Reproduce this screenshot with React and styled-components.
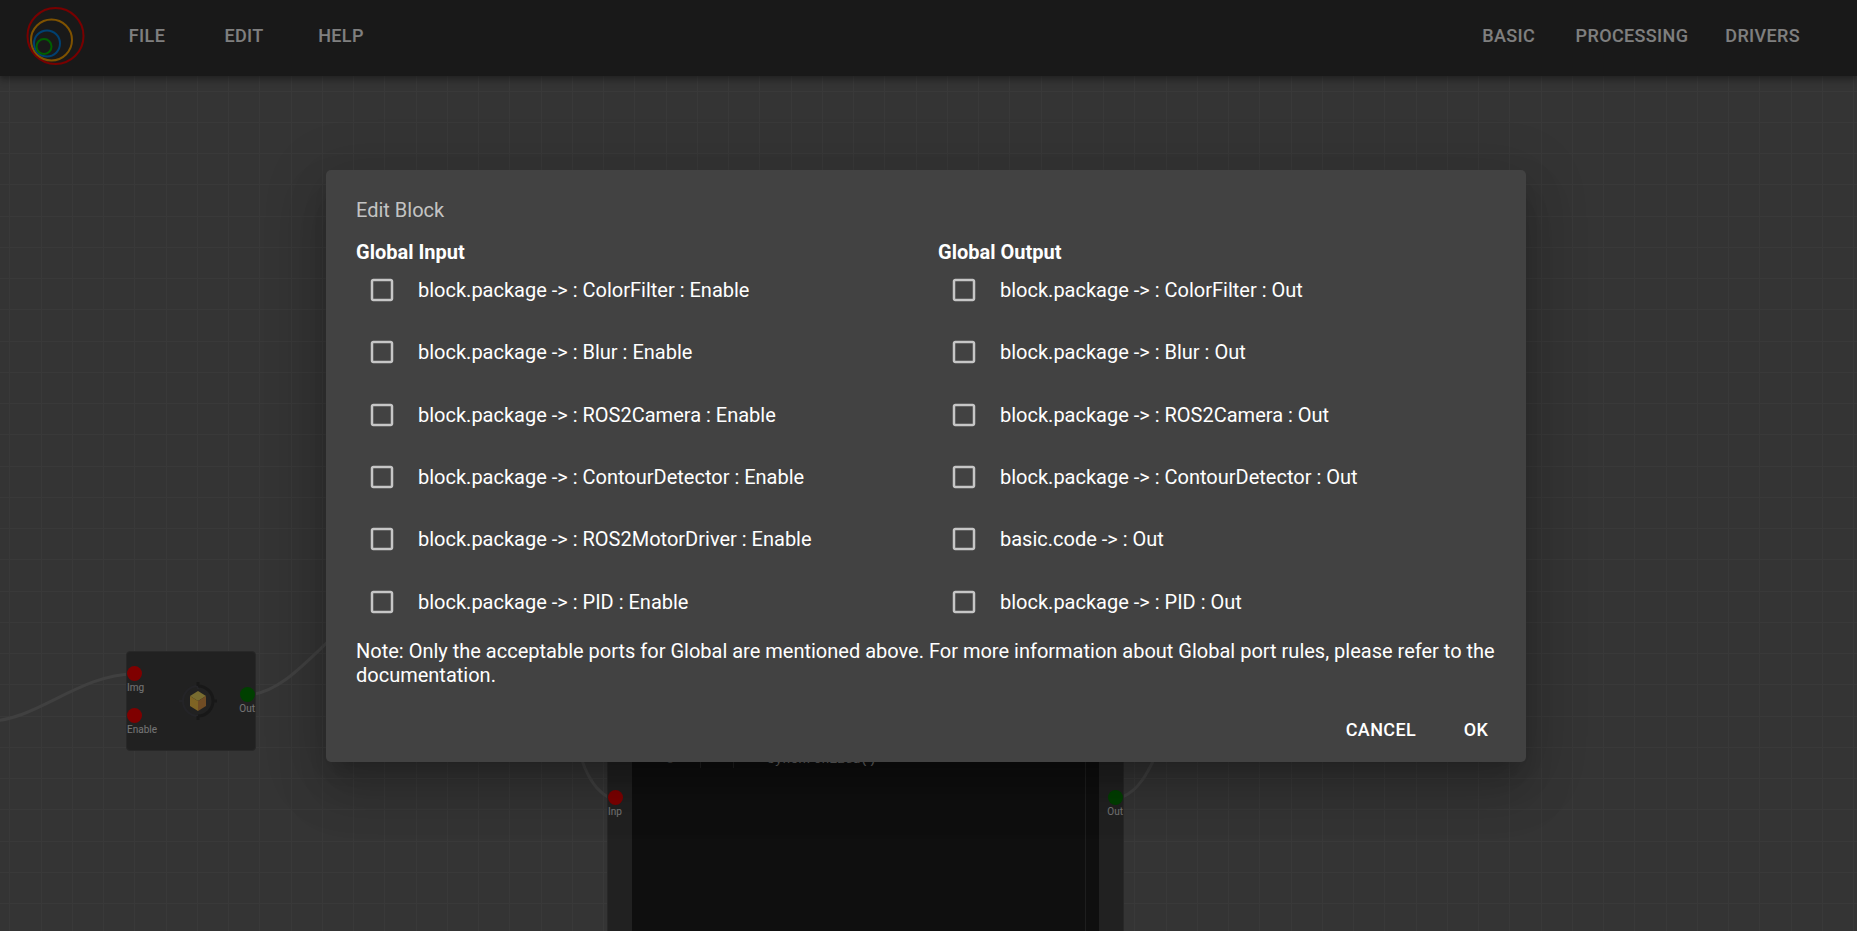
import React from 'react';
import styled, { createGlobalStyle } from 'styled-components';

const GlobalStyle = createGlobalStyle`
  * { box-sizing: border-box; }
  html, body, #root { height: 100%; }
  body {
    margin: 0;
    overflow: hidden;
    background: #686868;
    color: #fff;
    font-family: Roboto, "Liberation Sans", sans-serif;
    font-size: 20px;
  }
`;

const Page = styled.div`
  position: relative;
  display: flex;
  flex-direction: column;
  height: 100%;
`;

const AppBar = styled.header`
  position: relative;
  z-index: 1;
  display: flex;
  align-items: center;
  flex: none;
  height: 76px;
  padding: 0 47px 4px 26px;
  background: #333;
  box-shadow: 0 2px 5px rgba(0, 0, 0, 0.2), 0 5px 6px rgba(0, 0, 0, 0.14), 0 1px 12px rgba(0, 0, 0, 0.12);
`;

const Logo = styled.svg`
  flex: none;
  width: 60px;
  height: 60px;
  margin-right: 21px;
`;

const Menu = styled.nav`
  display: flex;
  gap: 17px;
  margin-left: ${(p) => (p.$end ? 'auto' : '0')};
`;

const Button = styled.button`
  min-width: 80px;
  padding: 8px 10px;
  border: 0;
  border-radius: 5px;
  background: none;
  color: #fff;
  font: 500 18px/30px Roboto, "Liberation Sans", sans-serif;
  letter-spacing: 0.02em;
  text-transform: uppercase;
  cursor: pointer;
`;

const Canvas = styled.main`
  position: relative;
  flex: 1;
  overflow: hidden;
`;

const Drawing = styled.svg`
  position: absolute;
  inset: 0;
  width: 100%;
  height: 100%;
`;

const Node = styled.section`
  position: absolute;
  left: ${(p) => p.$x}px;
  top: ${(p) => p.$y}px;
  width: ${(p) => p.$w}px;
  height: ${(p) => p.$h}px;
  border: 1px solid #505050;
  border-radius: 4px;
  background: #424242;
`;

const Port = styled.div`
  position: absolute;
  top: ${(p) => p.$y}px;
  ${(p) => (p.$side === 'out' ? 'right: 0;' : 'left: 0;')}
  display: flex;
  flex-direction: column;
  align-items: ${(p) => (p.$side === 'out' ? 'flex-end' : 'flex-start')};
  font-size: 10px;
  line-height: 12px;
  color: #e8e8e8;

  &::before {
    content: '';
    width: 15px;
    height: 15px;
    margin-bottom: 1px;
    border-radius: 50%;
    background: ${(p) => (p.$side === 'out' ? '#008000' : '#f00')};
  }
`;

const NodeIcon = styled.svg`
  position: absolute;
  left: 52px;
  top: 30px;
  width: 38px;
  height: 38px;
`;

const Editor = styled.div`
  position: absolute;
  inset: 0 24px;
  display: flex;
  background: #1e1e1e;
  color: #d4d4d4;
  font: 13px/24px "Liberation Mono", "DejaVu Sans Mono", monospace;
`;

const Gutter = styled.span`
  width: 64px;
  padding: 91px 22px 0 0;
  text-align: right;
  color: #858585;
`;

const Code = styled.code`
  flex: 1;
  padding: 91px 0 0 71px;
  border-right: 1px solid #3c3c3c;
  margin-right: 13px;
  font: inherit;
`;

const Guide = styled.i`
  position: absolute;
  left: ${(p) => p.$x}px;
  top: 0;
  width: 1px;
  height: 111px;
  background: #404040;
`;

const Backdrop = styled.div`
  position: absolute;
  inset: 0;
  z-index: 2;
  display: flex;
  align-items: center;
  justify-content: center;
  padding: 41px 45px 40px 40px;
  background: rgba(0, 0, 0, 0.5);
`;

const Dialog = styled.div`
  width: 100%;
  max-width: 1200px;
  border-radius: 5px;
  background: #424242;
  box-shadow: 0 14px 19px -9px rgba(0, 0, 0, 0.2), 0 30px 48px 4px rgba(0, 0, 0, 0.14), 0 11px 58px 10px rgba(0, 0, 0, 0.12);
`;

const Content = styled.div`
  padding: 25px 30px 10px;
  line-height: 24px;
`;

const Title = styled.h2`
  margin: 0 0 15px;
  color: rgba(255, 255, 255, 0.7);
  font-size: 20px;
  font-weight: 400;
  line-height: 30px;
`;

const Columns = styled.div`
  display: grid;
  grid-template-columns: 1fr 1fr;
  gap: 24px;
`;

const Group = styled.fieldset`
  min-width: 0;
  margin: 0;
  padding: 0;
  border: 0;
`;

const Legend = styled.legend`
  height: 19px;
  padding: 0;
  font-weight: 700;
`;

const Options = styled.div`
  display: grid;
  grid-template-rows: repeat(6, 1fr);
  height: 374px;
`;

const Option = styled.label`
  display: flex;
  align-items: center;
  gap: 21px;
  padding-left: 11px;
  cursor: pointer;
`;

const Tick = styled.span`
  position: relative;
  flex: none;
  width: 30px;
  height: 30px;

  input {
    position: absolute;
    inset: 0;
    width: 100%;
    height: 100%;
    margin: 0;
    opacity: 0;
    cursor: pointer;
  }
  svg {
    display: block;
    width: 100%;
    height: 100%;
    fill: rgba(255, 255, 255, 0.7);
  }
  .mark { display: none; }
  input:checked + svg .mark { display: inline; }
`;

const Note = styled.p`
  margin: 6px 0 0;
`;

const Actions = styled.div`
  display: flex;
  justify-content: flex-end;
  gap: 10px;
  padding: 10px 10px 9px;
`;

const inputs = ['ColorFilter', 'Blur', 'ROS2Camera', 'ContourDetector', 'ROS2MotorDriver', 'PID'].map(
  (name) => `block.package -> : ${name} : Enable`
);

const outputs = [
  'block.package -> : ColorFilter : Out',
  'block.package -> : Blur : Out',
  'block.package -> : ROS2Camera : Out',
  'block.package -> : ContourDetector : Out',
  'basic.code -> : Out',
  'block.package -> : PID : Out',
];

function PortGroup({ title, options }) {
  return (
    <Group>
      <Legend>{title}</Legend>
      <Options>
        {options.map((text) => (
          <Option key={text}>
            <Tick>
              <input type="checkbox" />
              <svg viewBox="0 0 24 24" aria-hidden="true">
                <path d="M19 5v14H5V5h14m0-2H5c-1.1 0-2 .9-2 2v14c0 1.1.9 2 2 2h14c1.1 0 2-.9 2-2V5c0-1.1-.9-2-2-2z" />
                <path className="mark" d="M10 17l-5-5 1.4-1.4 3.6 3.6 7.6-7.6L19 8z" />
              </svg>
            </Tick>
            {text}
          </Option>
        ))}
      </Options>
    </Group>
  );
}

function GridAndLinks() {
  const lines = [9, 41, 72, 103];
  const rows = [15, 46, 77, 108];
  return (
    <Drawing aria-hidden="true">
      <defs>
        <pattern id="grid" width="125" height="125" patternUnits="userSpaceOnUse">
          {lines.map((x) => <rect key={x} x={x} y="0" width="1" height="125" fill="#737373" />)}
          {rows.map((y) => <rect key={y} x="0" y={y} width="125" height="1" fill="#737373" />)}
        </pattern>
      </defs>
      <rect width="100%" height="100%" fill="url(#grid)" />
      <g fill="none" stroke="#808080" strokeWidth="3">
        <path d="M-10 645C35 645 80 598 134 598" />
        <path d="M247 619C290 617 320 565 380 520" />
        <path d="M574 650C580 690 592 712 608 721" />
        <path d="M1122 721C1138 715 1148 698 1160 670" />
      </g>
    </Drawing>
  );
}

export default function App() {
  return (
    <>
      <GlobalStyle />
      <Page>
        <AppBar>
          <Logo viewBox="0 0 60 60" fill="none" strokeWidth="2" aria-hidden="true">
            <circle cx="29.5" cy="30" r="28" stroke="#f00000" />
            <circle cx="25.5" cy="34" r="20.5" stroke="#ffa500" />
            <circle cx="21" cy="37.5" r="13" stroke="#0080e0" />
            <circle cx="18" cy="40.5" r="7.5" stroke="#00c000" />
          </Logo>
          <Menu>
            <Button>File</Button>
            <Button>Edit</Button>
            <Button>Help</Button>
          </Menu>
          <Menu $end>
            <Button>Basic</Button>
            <Button>Processing</Button>
            <Button>Drivers</Button>
          </Menu>
        </AppBar>
        <Canvas>
          <GridAndLinks />
          <Node $x={126} $y={575} $w={130} $h={100}>
            <Port $side="in" $y={14}>Img</Port>
            <Port $side="in" $y={56}>Enable</Port>
            <NodeIcon viewBox="0 0 38 38" aria-hidden="true">
              <path d="M19 4a15 15 0 0 0 0 30M0 19h4M19 4v3" fill="none" stroke="#48484f" strokeWidth="2" />
              <path d="M19 4a15 15 0 0 1 0 30M34 19h4M19 0v4M19 34v4" fill="none" stroke="#303030" strokeWidth="3" />
              <path d="M19 9l8 5-8 5-8-5z" fill="#f0d860" />
              <path d="M11 14l8 5v10l-8-5z" fill="#ffc848" />
              <path d="M27 14l-8 5v10l8-5z" fill="#e09848" />
            </NodeIcon>
            <Port $side="out" $y={35}>Out</Port>
          </Node>
          <Node $x={607} $y={580} $w={517} $h={360}>
            <Editor>
              <Gutter>8</Gutter>
              <Guide $x={68} />
              <Guide $x={101} />
              <Code>synchronized()</Code>
            </Editor>
            <Port $side="in" $y={133}>Inp</Port>
            <Port $side="out" $y={133}>Out</Port>
          </Node>
        </Canvas>
        <Backdrop>
          <Dialog role="dialog" aria-modal="true" aria-labelledby="dialog-title">
            <Content>
              <Title id="dialog-title">Edit Block</Title>
              <Columns>
                <PortGroup title="Global Input" options={inputs} />
                <PortGroup title="Global Output" options={outputs} />
              </Columns>
              <Note>
                Note: Only the acceptable ports for Global are mentioned above. For more information about
                Global port rules, please refer to the documentation.
              </Note>
            </Content>
            <Actions>
              <Button>Cancel</Button>
              <Button>OK</Button>
            </Actions>
          </Dialog>
        </Backdrop>
      </Page>
    </>
  );
}
